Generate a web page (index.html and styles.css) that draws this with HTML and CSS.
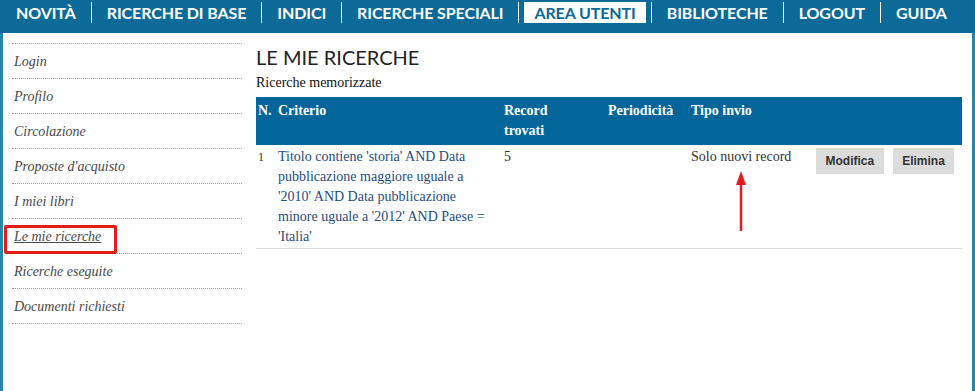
FILE: index.html
```html
<!DOCTYPE html>
<html lang="it">
<head>
<meta charset="utf-8">
<title>Le mie ricerche</title>
<link rel="stylesheet" href="styles.css">
</head>
<body>
<nav class="topnav">
  <ul class="menu">
    <li class="menu-item"><a class="menu-link">NOVITÀ</a></li>
    <li class="menu-item"><a class="menu-link">RICERCHE DI BASE</a></li>
    <li class="menu-item"><a class="menu-link">INDICI</a></li>
    <li class="menu-item"><a class="menu-link">RICERCHE SPECIALI</a></li>
    <li class="menu-item"><a class="menu-link active">AREA UTENTI</a></li>
    <li class="menu-item"><a class="menu-link">BIBLIOTECHE</a></li>
    <li class="menu-item"><a class="menu-link">LOGOUT</a></li>
    <li class="menu-item"><a class="menu-link">GUIDA</a></li>
  </ul>
</nav>
<div class="page">
  <aside class="sidebar">
    <ul class="side-list">
      <li class="side-item"><a class="side-link">Login</a></li>
      <li class="side-item"><a class="side-link">Profilo</a></li>
      <li class="side-item"><a class="side-link">Circolazione</a></li>
      <li class="side-item"><a class="side-link">Proposte d'acquisto</a></li>
      <li class="side-item"><a class="side-link">I miei libri</a></li>
      <li class="side-item"><a class="side-link current">Le mie ricerche</a></li>
      <li class="side-item"><a class="side-link">Ricerche eseguite</a></li>
      <li class="side-item"><a class="side-link">Documenti richiesti</a></li>
    </ul>
  </aside>
  <main class="main">
    <h1 class="title">LE MIE RICERCHE</h1>
    <p class="subtitle">Ricerche memorizzate</p>
    <table class="searches">
      <colgroup>
        <col class="c-n"><col class="c-crit"><col class="c-rec"><col class="c-per"><col class="c-tipo"><col class="c-act">
      </colgroup>
      <thead>
        <tr>
          <th>N.</th>
          <th>Criterio</th>
          <th>Record<br>trovati</th>
          <th>Periodicità</th>
          <th>Tipo invio</th>
          <th></th>
        </tr>
      </thead>
      <tbody>
        <tr>
          <td class="num">1</td>
          <td><a class="crit">Titolo contiene 'storia' AND Data<br>pubblicazione maggiore uguale a<br>'2010' AND Data pubblicazione<br>minore uguale a '2012' AND Paese =<br>'Italia'</a></td>
          <td>5</td>
          <td></td>
          <td>Solo nuovi record</td>
          <td class="actions"><div class="btns"><button class="btn">Modifica</button><button class="btn">Elimina</button></div></td>
        </tr>
      </tbody>
    </table>
  </main>
</div>
<div class="highlight-box"></div>
<svg class="arrow" width="20" height="62" viewBox="0 0 20 62">
  <line x1="10" y1="60" x2="10" y2="12" stroke="#e8191b" stroke-width="2.5"/>
  <polygon points="10,0 5,14 15,14" fill="#e8191b"/>
</svg>
</body>
</html>
```
FILE: styles.css
```css
html, body {
  margin: 0;
  padding: 0;
  background: #fff;
  height: 100%;
}
body {
  font-family: "Liberation Serif", "Times New Roman", serif;
  position: relative;
  display: flex;
  flex-direction: column;
  overflow: hidden;
}
.topnav {
  background: #0c6a99;
  height: 33px;
  flex: none;
}
.menu {
  list-style: none;
  margin: 0;
  padding: 2px 0 0 1px;
  display: flex;
}
.menu-item {
  height: 21px;
  border-left: 1px solid #fff;
  display: flex;
}
.menu-item:first-child {
  border-left: none;
}
.menu-link {
  display: block;
  margin: 0 5px;
  padding: 0 10px;
  font-family: Lato, "Open Sans", sans-serif;
  font-weight: 700;
  font-size: 16px;
  letter-spacing: -0.1px;
  line-height: 22px;
  color: #fff;
  white-space: nowrap;
}
.menu-link.active {
  background: #fff;
  color: #0c6a99;
}
.page {
  flex: 1;
  display: flex;
  border-left: 3px solid #2a86a6;
  border-right: 3px solid #2a86a6;
}
.sidebar {
  width: 230px;
  margin: 10px 0 0 9px;
  flex: none;
}
.side-list {
  list-style: none;
  margin: 0;
  padding: 0;
  border-top: 1px dotted #999;
}
.side-item {
  height: 34px;
  border-bottom: 1px dotted #999;
}
.side-link {
  display: block;
  padding-left: 2px;
  font-style: italic;
  font-size: 14px;
  line-height: 35px;
  color: #4a4a4a;
}
.side-link.current {
  text-decoration: underline;
}
.main {
  margin-left: 14px;
  width: 706px;
  padding-top: 12px;
}
.title {
  margin: 0;
  font-family: Lato, "Open Sans", sans-serif;
  font-weight: 400;
  font-size: 20px;
  line-height: 24px;
  color: #222;
}
.subtitle {
  margin: 6px 0 0;
  font-size: 14px;
  line-height: 16px;
  color: #111;
}
.searches {
  margin-top: 6px;
  width: 706px;
  border-collapse: collapse;
  table-layout: fixed;
  font-size: 14px;
}
.c-n { width: 20px; }
.c-crit { width: 226px; }
.c-rec { width: 104px; }
.c-per { width: 83px; }
.c-tipo { width: 123px; }
.c-act { width: 150px; }
.searches thead tr {
  background: #03669a;
}
.searches th {
  color: #fff;
  font-weight: 700;
  text-align: left;
  vertical-align: top;
  line-height: 20px;
  padding: 4px 2px;
  white-space: nowrap;
}
.searches td {
  vertical-align: top;
  line-height: 20px;
  padding: 2px 2px 1px;
  color: #333;
  border-bottom: 1px solid #ddd;
}
.searches td.num {
  font-size: 12px;
}
.crit {
  color: #1f4c7e;
  white-space: nowrap;
}
.searches td.actions {
  padding: 3px 2px 0 4px;
}
.btns {
  display: flex;
  gap: 9px;
}
.btn {
  height: 26px;
  padding: 0 9.5px;
  border: none;
  background: #dcdcdc;
  font-family: "Liberation Sans", Arial, sans-serif;
  font-weight: 700;
  font-size: 12px;
  color: #333;
}
.highlight-box {
  position: absolute;
  left: 4px;
  top: 225px;
  width: 107px;
  height: 23px;
  border: 3px solid #e31b1b;
  border-radius: 2px;
}
.arrow {
  position: absolute;
  left: 731px;
  top: 171px;
}
```
